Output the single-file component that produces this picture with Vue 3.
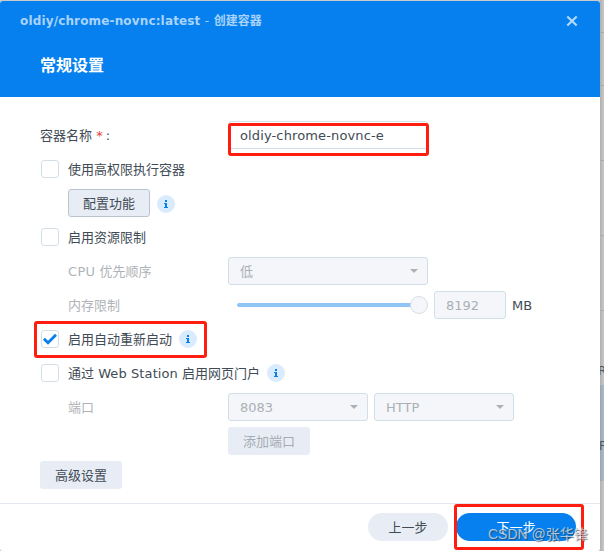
<script setup>
import { ref } from 'vue'

const name = ref('oldiy-chrome-novnc-e')
const memory = ref(8192)
const maxMemory = 8192
</script>

<template>
  <div class="desktop">
    <div class="backdrop">
      <span class="edge-line l1"></span>
      <span class="edge-line l2"></span>
      <span class="edge-line l3"></span>
      <span class="edge-line l4"></span>
      <span class="edge-line l5"></span>
      <span class="edge-selected"></span>
      <span class="edge-text t1">R</span>
      <span class="edge-text t2">P</span>
    </div>

    <section class="dialog">
      <header class="head">
        <div class="titlebar">
          <span class="title"><span class="title-latin">oldiy/chrome-novnc:latest</span> <span class="title-dash">-</span> 创建容器</span>
          <svg class="close" width="12" height="12" viewBox="0 0 12 12">
            <path d="M1.3 1.4 L10.7 10.6 M10.7 1.4 L1.3 10.6" fill="none" stroke="#b4dafc" stroke-width="2.1" />
          </svg>
        </div>
        <h1 class="heading">常规设置</h1>
      </header>

      <main class="form">
        <div class="row">
          <label class="label">容器名称 <i class="required">*</i>:</label>
          <div class="field name">{{ name }}</div>
        </div>
        <div class="row check-row">
          <span class="box"></span><span class="txt">使用高权限执行容器</span>
        </div>
        <div class="row indent">
          <button class="btn outlined">配置功能</button>
          <span class="info"><svg width="18" height="18" viewBox="0 0 18 18"><path d="M8 5h2v2H8zM7 8h3v4h1v1H7v-1h1V9H7z" fill="#0580ee" /></svg></span>
        </div>
        <div class="row check-row">
          <span class="box"></span><span class="txt">启用资源限制</span>
        </div>
        <div class="row indent">
          <label class="label muted"><span class="wide">CPU</span> 优先顺序</label>
          <div class="field off priority">低<i class="caret"></i></div>
        </div>
        <div class="row indent">
          <label class="label muted">内存限制</label>
          <div class="slider">
            <div class="track" :style="{ width: (memory / maxMemory) * 100 + '%' }"></div>
            <span class="knob"></span>
          </div>
          <div class="field off memory">{{ memory }}</div>
          <span class="unit">MB</span>
        </div>
        <div class="row check-row">
          <span class="box"><svg width="16" height="16" viewBox="0 0 16 16"><path d="M1.9 7.8 L6 11.8 L14 3.7" fill="none" stroke="#0580ee" stroke-width="2.8" /></svg></span>
          <span class="txt">启用自动重新启动</span>
          <span class="info"><svg width="18" height="18" viewBox="0 0 18 18"><path d="M8 5h2v2H8zM7 8h3v4h1v1H7v-1h1V9H7z" fill="#0580ee" /></svg></span>
        </div>
        <div class="row check-row">
          <span class="box"></span><span class="txt">通过 <span class="station">Web Station</span> 启用网页门户</span>
          <span class="info"><svg width="18" height="18" viewBox="0 0 18 18"><path d="M8 5h2v2H8zM7 8h3v4h1v1H7v-1h1V9H7z" fill="#0580ee" /></svg></span>
        </div>
        <div class="row indent">
          <label class="label muted">端口</label>
          <div class="field off port">8083<i class="caret"></i></div>
          <div class="field off port">HTTP<i class="caret"></i></div>
        </div>
        <div class="row indent">
          <label class="label"></label>
          <button class="btn disabled">添加端口</button>
        </div>
        <div class="row">
          <button class="btn">高级设置</button>
        </div>
      </main>

      <footer class="foot">
        <button class="pill">上一步</button>
        <button class="pill primary">下一步</button>
      </footer>
    </section>

    <span class="mark mark-name"></span>
    <span class="mark mark-restart"></span>
    <span class="mark mark-next"></span>
    <span class="watermark">CSDN @张华锋</span>
  </div>
</template>

<style>
body {
  margin: 0;
}
</style>

<style scoped>
.desktop {
  position: relative;
  width: 604px;
  height: 551px;
  overflow: hidden;
  box-sizing: border-box;
  padding-top: 1px;
  background: #cbcbcb;
  font: 13px/28px "DejaVu Sans", "Noto Sans CJK SC", sans-serif;
  color: #414b55;
}
.backdrop {
  position: absolute;
  top: 0;
  left: 600px;
  width: 4px;
  height: 551px;
  background: linear-gradient(90deg, #b0b0b0, #c8c8c8);
  overflow: hidden;
}
.edge-line {
  position: absolute;
  left: 0;
  width: 4px;
  height: 1px;
  background: #a9abad;
}
.l1 { top: 32px; }
.l2 { top: 85px; }
.l3 { top: 160px; }
.l4 { top: 235px; }
.l5 { top: 310px; }
.edge-selected {
  position: absolute;
  top: 385px;
  left: 0;
  width: 4px;
  height: 96px;
  background: linear-gradient(90deg, #98a5b2, #adbbc8);
}
.edge-text {
  position: absolute;
  left: -2px;
  font-size: 12px;
  line-height: 14px;
  color: #4c5660;
}
.t1 { top: 364px; }
.t2 { top: 439px; left: -1px; }

.dialog {
  position: relative;
  display: flex;
  flex-direction: column;
  width: 600px;
  height: 550px;
  border-radius: 3px;
  overflow: hidden;
  background: #fff;
}
.head {
  height: 96px;
  box-sizing: border-box;
  padding: 6px 22px 0 20px;
  background: #0580ee;
}
.titlebar {
  display: flex;
  align-items: center;
  justify-content: space-between;
  height: 28px;
  color: #a9d3fa;
  font-weight: bold;
  font-size: 12px;
}
.title {
  white-space: nowrap;
}
.title-latin {
  letter-spacing: 0.15px;
}
.title-dash {
  font-weight: normal;
  letter-spacing: 0.6px;
}
.close {
  display: block;
}
.heading {
  margin: 17px 0 0 20px;
  font-size: 16px;
  line-height: 28px;
  font-weight: bold;
  color: #fff;
}
.form {
  display: flex;
  flex-direction: column;
  gap: 6px;
  flex: 1;
  padding: 24px 40px 0;
}
.row {
  display: flex;
  align-items: center;
  gap: 6px;
  height: 28px;
  white-space: nowrap;
}
.indent {
  padding-left: 28px;
}
.label,
.txt,
.unit {
  padding-top: 1px;
  line-height: 27px;
}
.label {
  width: 182px;
}
.indent .label {
  width: 154px;
}
.required {
  font-style: normal;
  color: #e64040;
  margin-right: 3px;
}
.muted {
  color: #afb3b7;
}
.check-row {
  gap: 0;
}
.box {
  box-sizing: border-box;
  width: 18px;
  height: 18px;
  margin: 0 9px 0 1px;
  border: 1px solid #d3dfe8;
  border-radius: 3px;
  background: #fff;
}
.box svg {
  display: block;
}
.wide {
  letter-spacing: 0.3px;
}
.station {
  letter-spacing: 0.1px;
}
.info {
  width: 18px;
  height: 18px;
  margin-left: 7px;
  border-radius: 50%;
  background: #d9ebfd;
}
.row.indent .info {
  margin: 2px 0 0 1px;
}
.info svg {
  display: block;
}
.field {
  position: relative;
  box-sizing: border-box;
  height: 28px;
  padding-left: 11px;
  border: 1px solid #d0dfe8;
  border-radius: 3px;
  line-height: 28px;
}
.off {
  background: #f4f6fa;
  color: #abb0b5;
}
.name,
.priority {
  width: 200px;
}
.name {
  letter-spacing: 0.13px;
}
.memory {
  width: 72px;
}
.port {
  width: 140px;
}
.caret {
  position: absolute;
  right: 9px;
  top: 11px;
  border: 4.5px solid transparent;
  border-top-color: #adb1b6;
  border-bottom: 0;
}
.slider {
  position: relative;
  width: 182px;
  height: 18px;
  margin: 0 9px 0 9px;
  display: flex;
  align-items: center;
}
.track {
  height: 4px;
  border-radius: 2px;
  background: #8fc4f3;
}
.knob {
  position: absolute;
  right: -9px;
  top: 0;
  box-sizing: border-box;
  width: 18px;
  height: 18px;
  border: 1px solid #d8dde4;
  border-radius: 50%;
  background: #f4f6fa;
}
.btn,
.pill {
  box-sizing: border-box;
  height: 28px;
  padding: 1px 0 0;
  border: 0;
  background: #e8edf5;
  color: #414b55;
  font: inherit;
  line-height: 27px;
}
.btn {
  width: 82px;
  border-radius: 3px;
}
.outlined {
  border: 1px solid #bbc4d1;
  line-height: 25px;
}
.disabled {
  color: #a5abb3;
}
.foot {
  display: flex;
  justify-content: flex-end;
  gap: 8px;
  height: 48px;
  box-sizing: border-box;
  padding: 9px 24px 0 0;
  border-top: 1px solid #e1e7ec;
}
.pill {
  width: 80px;
  border-radius: 14px;
}
.primary {
  width: 120px;
  background: #0580ee;
  color: #fff;
}
.mark {
  position: absolute;
  box-sizing: border-box;
  border: 3px solid #ff1d10;
  border-radius: 3px;
}
.mark-name {
  left: 228px;
  top: 123px;
  width: 201px;
  height: 33px;
}
.mark-restart {
  left: 34px;
  top: 321px;
  width: 173px;
  height: 37px;
}
.mark-next {
  left: 454px;
  top: 504px;
  width: 130px;
  height: 46px;
}
.watermark {
  position: absolute;
  left: 488px;
  top: 524px;
  font: 14px/20px "Liberation Sans", "Noto Sans CJK SC", sans-serif;
  white-space: nowrap;
  color: rgba(225, 228, 232, 0.75);
  text-shadow: 1px 1px 1px rgba(50, 55, 60, 0.7);
}
</style>
